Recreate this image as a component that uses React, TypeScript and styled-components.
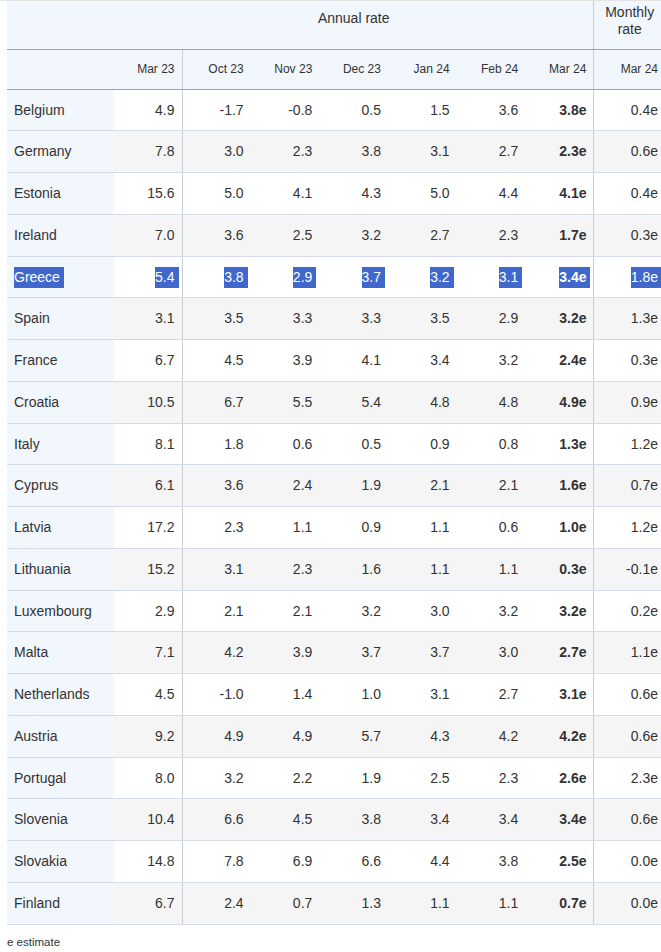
import React from "react";
import styled, { createGlobalStyle } from "styled-components";

const Global = createGlobalStyle`
  html, body { margin: 0; padding: 0; background: #fff; }
  body { font-family: "Liberation Sans", Arial, sans-serif; color: #333; }
`;

const Page = styled.div`
  width: 661px;
  overflow: hidden;
  border-top: 1px solid #e4e4e4;
  padding-left: 7px;
  box-sizing: border-box;
`;

const Table = styled.table`
  width: 658px;
  table-layout: fixed;
  border-collapse: collapse;
  font-size: 14px;
`;

const HeadCell = styled.th<{ $top?: number; $right?: boolean; $small?: boolean; $align?: string }>`
  background: #f2f6fd;
  font-weight: normal;
  color: #333;
  font-size: ${(p) => (p.$small ? "12px" : "14px")};
  line-height: 17px;
  text-align: ${(p) => p.$align || "center"};
  vertical-align: ${(p) => (p.$top !== undefined ? "top" : "middle")};
  padding: ${(p) => (p.$top !== undefined ? `${p.$top}px 7px 0` : "0 7px")};
  border-right: ${(p) => (p.$right ? "1px solid #c6ccd8" : "none")};
  border-bottom: 1px solid #8ea3c9;
`;

const TopRow = styled.tr`
  height: 48px;
`;

const DateRow = styled.tr`
  height: 40px;
`;

const Row = styled.tr<{ $alt: boolean }>`
  background: ${(p) => (p.$alt ? "#f5f5f5" : "#ffffff")};
`;

const CountryCell = styled.td`
  background: #f2f6fd;
  text-align: left;
  padding: 10px 7px 9.75px;
  line-height: 21px;
  border-bottom: 1px solid #d5dbea;
  white-space: nowrap;
`;

const NumCell = styled.td<{ $bold?: boolean; $right?: boolean }>`
  text-align: right;
  padding: 10px 7px 9.75px;
  line-height: 21px;
  font-weight: ${(p) => (p.$bold ? "bold" : "normal")};
  border-bottom: 1px solid #d5dbea;
  border-right: ${(p) => (p.$right ? "1px solid #c6ccd8" : "none")};
  white-space: nowrap;
`;

const Selected = styled.span`
  display: inline-block;
  line-height: 21px;
  background: #4068cc;
  color: #fff;
  padding-right: 4px;
  margin-right: -4px;
`;

const Note = styled.div`
  font-size: 11.5px;
  color: #333;
  margin-top: 11px;
  padding-bottom: 4px;
`;

const months = ["Mar 23", "Oct 23", "Nov 23", "Dec 23", "Jan 24", "Feb 24", "Mar 24"];

const data: [string, string[]][] = [
  ["Belgium", ["4.9", "-1.7", "-0.8", "0.5", "1.5", "3.6", "3.8e", "0.4e"]],
  ["Germany", ["7.8", "3.0", "2.3", "3.8", "3.1", "2.7", "2.3e", "0.6e"]],
  ["Estonia", ["15.6", "5.0", "4.1", "4.3", "5.0", "4.4", "4.1e", "0.4e"]],
  ["Ireland", ["7.0", "3.6", "2.5", "3.2", "2.7", "2.3", "1.7e", "0.3e"]],
  ["Greece", ["5.4", "3.8", "2.9", "3.7", "3.2", "3.1", "3.4e", "1.8e"]],
  ["Spain", ["3.1", "3.5", "3.3", "3.3", "3.5", "2.9", "3.2e", "1.3e"]],
  ["France", ["6.7", "4.5", "3.9", "4.1", "3.4", "3.2", "2.4e", "0.3e"]],
  ["Croatia", ["10.5", "6.7", "5.5", "5.4", "4.8", "4.8", "4.9e", "0.9e"]],
  ["Italy", ["8.1", "1.8", "0.6", "0.5", "0.9", "0.8", "1.3e", "1.2e"]],
  ["Cyprus", ["6.1", "3.6", "2.4", "1.9", "2.1", "2.1", "1.6e", "0.7e"]],
  ["Latvia", ["17.2", "2.3", "1.1", "0.9", "1.1", "0.6", "1.0e", "1.2e"]],
  ["Lithuania", ["15.2", "3.1", "2.3", "1.6", "1.1", "1.1", "0.3e", "-0.1e"]],
  ["Luxembourg", ["2.9", "2.1", "2.1", "3.2", "3.0", "3.2", "3.2e", "0.2e"]],
  ["Malta", ["7.1", "4.2", "3.9", "3.7", "3.7", "3.0", "2.7e", "1.1e"]],
  ["Netherlands", ["4.5", "-1.0", "1.4", "1.0", "3.1", "2.7", "3.1e", "0.6e"]],
  ["Austria", ["9.2", "4.9", "4.9", "5.7", "4.3", "4.2", "4.2e", "0.6e"]],
  ["Portugal", ["8.0", "3.2", "2.2", "1.9", "2.5", "2.3", "2.6e", "2.3e"]],
  ["Slovenia", ["10.4", "6.6", "4.5", "3.8", "3.4", "3.4", "3.4e", "0.6e"]],
  ["Slovakia", ["14.8", "7.8", "6.9", "6.6", "4.4", "3.8", "2.5e", "0.0e"]],
  ["Finland", ["6.7", "2.4", "0.7", "1.3", "1.1", "1.1", "0.7e", "0.0e"]],
];

const widths = [107, 68, 68.67, 68.67, 68.67, 68.67, 68.67, 68.65, 71];

export default function App() {
  return (
    <Page>
      <Global />
      <Table>
        <colgroup>
          {widths.map((w, i) => (
            <col key={i} style={{ width: w }} />
          ))}
        </colgroup>
        <thead>
          <TopRow>
            <HeadCell />
            <HeadCell colSpan={7} $top={9} $right>
              Annual rate
            </HeadCell>
            <HeadCell $top={3}>
              Monthly
              <br />
              rate
            </HeadCell>
          </TopRow>
          <DateRow>
            <HeadCell />
            {months.map((m, i) => (
              <HeadCell key={m} $small $align="right" $right={i === 0 || i === 6}>
                {m}
              </HeadCell>
            ))}
            <HeadCell $small $align="right">
              Mar 24
            </HeadCell>
          </DateRow>
        </thead>
        <tbody>
          {data.map(([country, vals], r) => {
            const sel = country === "Greece";
            const wrap = (t: string) => (sel ? <Selected>{t}</Selected> : t);
            return (
              <Row key={country} $alt={r % 2 === 1}>
                <CountryCell>{wrap(country)}</CountryCell>
                {vals.map((v, i) => (
                  <NumCell key={i} $bold={i === 6} $right={i === 0 || i === 6}>
                    {wrap(v)}
                  </NumCell>
                ))}
              </Row>
            );
          })}
        </tbody>
      </Table>
      <Note>e estimate</Note>
    </Page>
  );
}
